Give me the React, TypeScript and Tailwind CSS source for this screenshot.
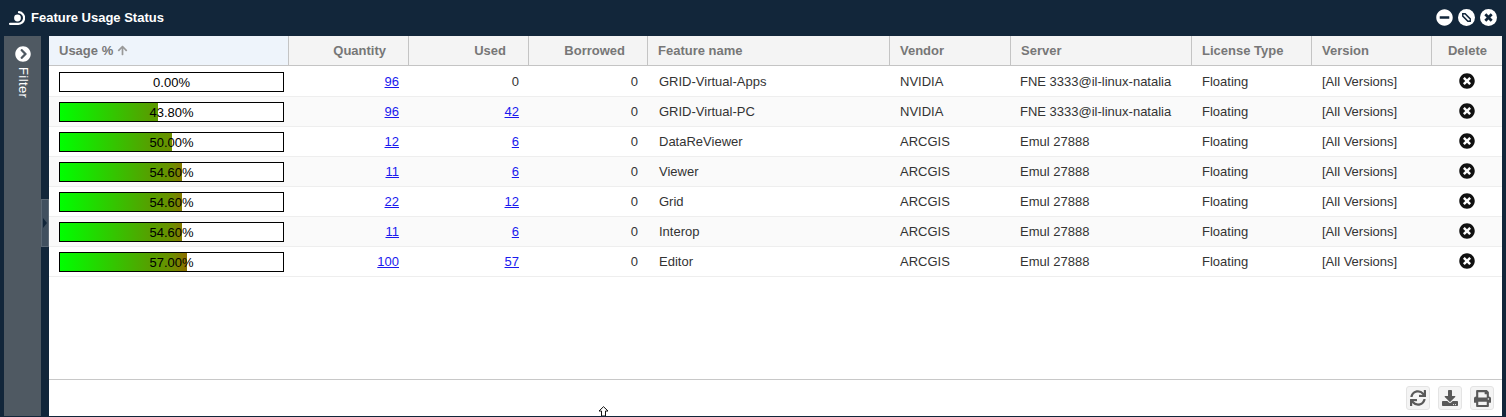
import { ReactNode } from 'react';
import {
  FaArrowUp,
  FaChevronCircleRight,
  FaDownload,
  FaMinusCircle,
  FaPrint,
  FaSync,
  FaTimesCircle,
} from 'react-icons/fa';

const GRID = 'grid grid-cols-[240px_120px_120px_119px_242px_121px_181px_120px_120px_71px]';

const rows = [
  { pct: 0, qty: '96', used: '0', name: 'GRID-Virtual-Apps', vendor: 'NVIDIA', server: 'FNE 3333@il-linux-natalia' },
  { pct: 43.8, qty: '96', used: '42', name: 'GRID-Virtual-PC', vendor: 'NVIDIA', server: 'FNE 3333@il-linux-natalia' },
  { pct: 50, qty: '12', used: '6', name: 'DataReViewer', vendor: 'ARCGIS', server: 'Emul 27888' },
  { pct: 54.6, qty: '11', used: '6', name: 'Viewer', vendor: 'ARCGIS', server: 'Emul 27888' },
  { pct: 54.6, qty: '22', used: '12', name: 'Grid', vendor: 'ARCGIS', server: 'Emul 27888' },
  { pct: 54.6, qty: '11', used: '6', name: 'Interop', vendor: 'ARCGIS', server: 'Emul 27888' },
  { pct: 57, qty: '100', used: '57', name: 'Editor', vendor: 'ARCGIS', server: 'Emul 27888' },
];

function HeaderCell({ children, right }: { children: ReactNode; right?: boolean }) {
  return (
    <div
      className={`flex items-center h-full border-r border-[#c4c4c4] ${right ? 'justify-end pr-[22px]' : 'pl-[10px]'}`}
    >
      {children}
    </div>
  );
}

function UsageBar({ pct }: { pct: number }) {
  return (
    <div className="relative w-[225px] h-[20px] border border-black bg-white overflow-hidden">
      <div className="h-full overflow-hidden" style={{ width: `${pct}%` }}>
        <div className="w-[223px] h-full bg-[linear-gradient(to_right,#00ff00_0%,#55a000_40%,#6b8f00_50%,#8a7200_56%,#8a7200_100%)]" />
      </div>
      <div className="absolute inset-0 flex items-center justify-center pt-[2px] text-[13px] text-black">
        {pct.toFixed(2)}%
      </div>
    </div>
  );
}

function CountLink({ value }: { value: string }) {
  return <a className="text-[#1a1aee] underline">{value}</a>;
}

function ToolButton({ children }: { children: ReactNode }) {
  return (
    <button className="flex items-center justify-center w-[24px] h-[24px] rounded-[3px] border border-[#e4e4e4] bg-[#f4f4f4] text-[#595959]">
      {children}
    </button>
  );
}

export default function App() {
  return (
    <div className="relative flex flex-col w-[1506px] h-[417px] overflow-hidden bg-[#12263a] font-['Liberation_Sans',Arial,sans-serif] text-[13px] text-[#333]">
      {/* title bar */}
      <div className="flex items-center h-[36px] shrink-0 pl-[9px] pr-[9px] pb-[1px] text-white">
        <svg width="16" height="14" viewBox="0 0 16 14" fill="none" className="mr-[6px]">
          <circle cx="8.5" cy="7" r="3.4" fill="white" />
          <path d="M10 1.2a5.8 5.8 0 0 1 -1.5 11.6H1" stroke="white" strokeWidth="2.2" strokeLinecap="round" />
        </svg>
        <span className="font-bold text-[13px] leading-none">Feature Usage Status</span>
        <div className="ml-auto flex items-center gap-[5px]">
          <FaMinusCircle size={17} />
          <svg width="17" height="17" viewBox="0 0 16 16">
            <circle cx="8" cy="8" r="8" fill="white" />
            <path d="M3.8 3.8H7L12.2 9V12.2H9L3.8 7z" fill="#12263a" />
            <path d="M5.2 5.2H6.4L10.8 9.6V10.8H9.6L5.2 6.4z" fill="white" />
          </svg>
          <svg width="17" height="17" viewBox="0 0 16 16">
            <circle cx="8" cy="8" r="8" fill="white" />
            <path d="M5 5l6 6M11 5l-6 6" stroke="#12263a" strokeWidth="2.6" />
          </svg>
        </div>
      </div>

      <div className="flex flex-1 min-h-0 pl-[4px] pr-[4px] pb-[1px]">
        {/* filter rail */}
        <div className="flex flex-col items-center w-[37px] shrink-0 bg-[#4f5962] text-white pt-[10px]">
          <FaChevronCircleRight size={16} />
          <span className="mt-[5px] ml-[1px] tracking-[0.4px] [writing-mode:vertical-rl]">Filter</span>
        </div>

        {/* splitter */}
        <div className="flex items-center w-[8px] shrink-0 pb-[6px]">
          <div className="flex items-center justify-center w-[8px] h-[48px] bg-[#41505f] border border-[#5b6875]">
            <div className="w-0 h-0 border-y-[5px] border-y-transparent border-l-[4px] border-l-[#12263a]" />
          </div>
        </div>

        {/* table panel */}
        <div className="flex flex-col flex-1 min-w-0 bg-white">
          <div className={`${GRID} h-[30px] shrink-0 bg-[#f4f4f4] border-b border-[#c4c4c4] font-bold text-[#777]`}>
            <div className="flex items-center gap-[4px] h-full pl-[10px] bg-[#eef4fb] border-r border-[#c4c4c4]">
              Usage %
              <FaArrowUp size={11} className="text-[#999]" />
            </div>
            <HeaderCell right>Quantity</HeaderCell>
            <HeaderCell right>Used</HeaderCell>
            <HeaderCell right>Borrowed</HeaderCell>
            <HeaderCell>Feature name</HeaderCell>
            <HeaderCell>Vendor</HeaderCell>
            <HeaderCell>Server</HeaderCell>
            <HeaderCell>License Type</HeaderCell>
            <HeaderCell>Version</HeaderCell>
            <div className="flex items-center justify-center h-full">Delete</div>
          </div>

          <div className="flex-1 min-h-0 pt-px">
            {rows.map((row, i) => (
              <div
                key={row.name}
                className={`${GRID} items-center h-[30px] border-b border-[#eeeeee] ${i % 2 ? 'bg-[#fafafa]' : 'bg-white'}`}
              >
                <div className="pl-[10px]">
                  <UsageBar pct={row.pct} />
                </div>
                <div className="text-right pr-[10px]">
                  <CountLink value={row.qty} />
                </div>
                <div className="text-right pr-[10px]">
                  {row.used === '0' ? '0' : <CountLink value={row.used} />}
                </div>
                <div className="text-right pr-[10px]">0</div>
                <div className="pl-[11px]">{row.name}</div>
                <div className="pl-[10px]">{row.vendor}</div>
                <div className="pl-[9px] whitespace-nowrap">{row.server}</div>
                <div className="pl-[10px]">Floating</div>
                <div className="pl-[10px]">[All Versions]</div>
                <div className="flex justify-center pr-[1px] pb-[1px] text-[#111]">
                  <FaTimesCircle size={16} />
                </div>
              </div>
            ))}
          </div>

          <div className="flex items-center justify-end gap-[8px] h-[37px] shrink-0 pr-[8px] border-t border-[#c8c8c8]">
            <ToolButton>
              <FaSync size={16} />
            </ToolButton>
            <ToolButton>
              <FaDownload size={16} />
            </ToolButton>
            <ToolButton>
              <FaPrint size={17} />
            </ToolButton>
          </div>
        </div>
      </div>

      {/* mouse pointer caught in the capture */}
      <svg width="11" height="10" viewBox="0 0 11 10" className="absolute left-[597.5px] top-[406px]">
        <path d="M5.5 .7 10 5H7.5v5h-4V5H1z" fill="white" stroke="#111" strokeWidth="1" />
      </svg>
    </div>
  );
}
